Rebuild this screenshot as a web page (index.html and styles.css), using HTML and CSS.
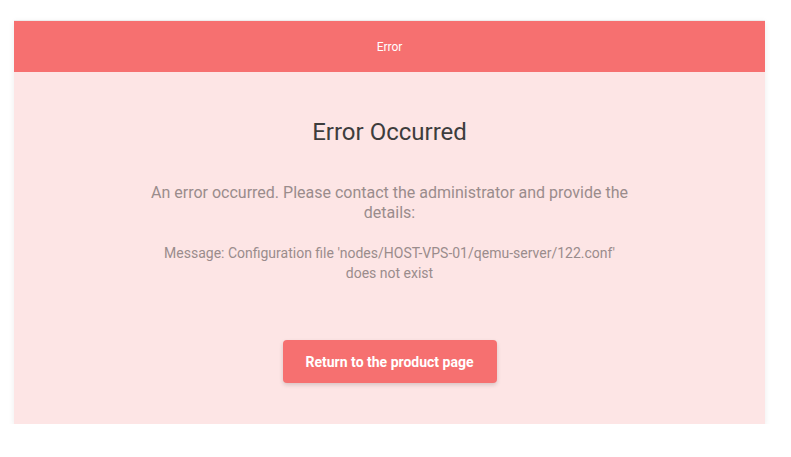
FILE: index.html
```html
<!DOCTYPE html>
<html>
<head>
<meta charset="utf-8">
<link rel="stylesheet" href="styles.css">
</head>
<body>
<div class="card">
  <div class="card-header">Error</div>
  <div class="card-body">
    <h1 class="title">Error Occurred</h1>
    <p class="lead">An error occurred. Please contact the administrator and provide the details:</p>
    <p class="message">Message: Configuration file 'nodes/HOST-VPS-01/qemu-server/122.conf' does not exist</p>
    <a class="btn">Return to the product page</a>
  </div>
</div>
</body>
</html>
```

FILE: styles.css
```css
html, body {
  margin: 0;
  padding: 0;
  background: #ffffff;
  font-family: Roboto, "Liberation Sans", sans-serif;
}
body {
  padding: 20px 26px 0 14px;
}
.card {
  background: #fde5e5;
  border-top: 1px solid #ececec;
  box-shadow: 0 2px 6px rgba(0, 0, 0, 0.08);
}
.card-header {
  background: #f67070;
  color: #ffffff;
  font-size: 12px;
  height: 51px;
  display: flex;
  align-items: center;
  justify-content: center;
}
.card-body {
  display: flex;
  flex-direction: column;
  align-items: center;
  padding: 46px 20px 41px;
  text-align: center;
}
.title {
  margin: 0;
  font-size: 24px;
  font-weight: 400;
  color: #3d3d3d;
  line-height: 28px;
}
.lead {
  margin: 37px 0 0;
  max-width: 490px;
  font-size: 16px;
  line-height: 20px;
  color: #9a8c8c;
}
.message {
  margin: 20px 0 0;
  max-width: 470px;
  font-size: 14px;
  line-height: 20px;
  color: #9a8c8c;
}
.btn {
  margin-top: 57px;
  width: 214px;
  height: 43px;
  display: flex;
  align-items: center;
  justify-content: center;
  background: #f67070;
  color: #ffffff;
  font-weight: 700;
  font-size: 14px;
  border-radius: 4px;
  box-shadow: 0 2px 4px rgba(0, 0, 0, 0.15);
}
```
